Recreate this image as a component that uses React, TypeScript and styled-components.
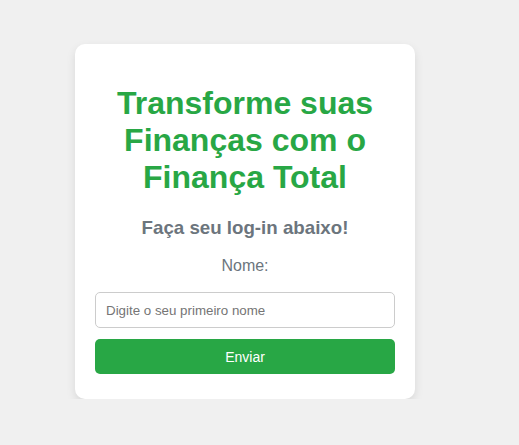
import React from "react";
import styled, { createGlobalStyle } from "styled-components";

const Global = createGlobalStyle`
  html, body {
    margin: 0;
    padding: 0;
    background: #f0f0f0;
    font-family: "Liberation Sans", Arial, sans-serif;
  }
`;

const Page = styled.div`
  display: flex;
  align-items: flex-start;
  padding: 44px 0 0 75px;
`;

const Card = styled.div`
  width: 340px;
  box-sizing: border-box;
  background: #ffffff;
  border-radius: 10px;
  box-shadow: 0 4px 10px rgba(0, 0, 0, 0.1);
  padding: 20px 20px 25px;
  display: flex;
  flex-direction: column;
  text-align: center;
`;

const Title = styled.h1`
  margin: 21px 0 21px;
  font-size: 32px;
  line-height: 37px;
  font-weight: 700;
  color: #28a745;
`;

const Subtitle = styled.h3`
  margin: 0 0 18px;
  font-size: 18.72px;
  font-weight: 700;
  color: #6c757d;
`;

const Label = styled.label`
  font-size: 16px;
  color: #6c757d;
  margin-bottom: 17px;
`;

const Input = styled.input`
  box-sizing: border-box;
  width: 100%;
  height: 36px;
  padding: 0 10px;
  border: 1px solid #cccccc;
  border-radius: 5px;
  font-family: "Liberation Sans", Arial, sans-serif;
  font-size: 13.33px;
  color: #333;
  outline: none;
  &::placeholder {
    color: #757575;
  }
`;

const Button = styled.button`
  box-sizing: border-box;
  width: 100%;
  height: 35px;
  margin-top: 11px;
  border: none;
  border-radius: 5px;
  background: #28a745;
  color: #ffffff;
  font-family: "Liberation Sans", Arial, sans-serif;
  font-size: 14px;
  cursor: pointer;
`;

export default function App() {
  return (
    <>
      <Global />
      <Page>
        <Card>
          <Title>Transforme suas Finanças com o Finança Total</Title>
          <Subtitle>Faça seu log-in abaixo!</Subtitle>
          <Label htmlFor="nome">Nome:</Label>
          <Input id="nome" type="text" placeholder="Digite o seu primeiro nome" />
          <Button type="button">Enviar</Button>
        </Card>
      </Page>
    </>
  );
}
